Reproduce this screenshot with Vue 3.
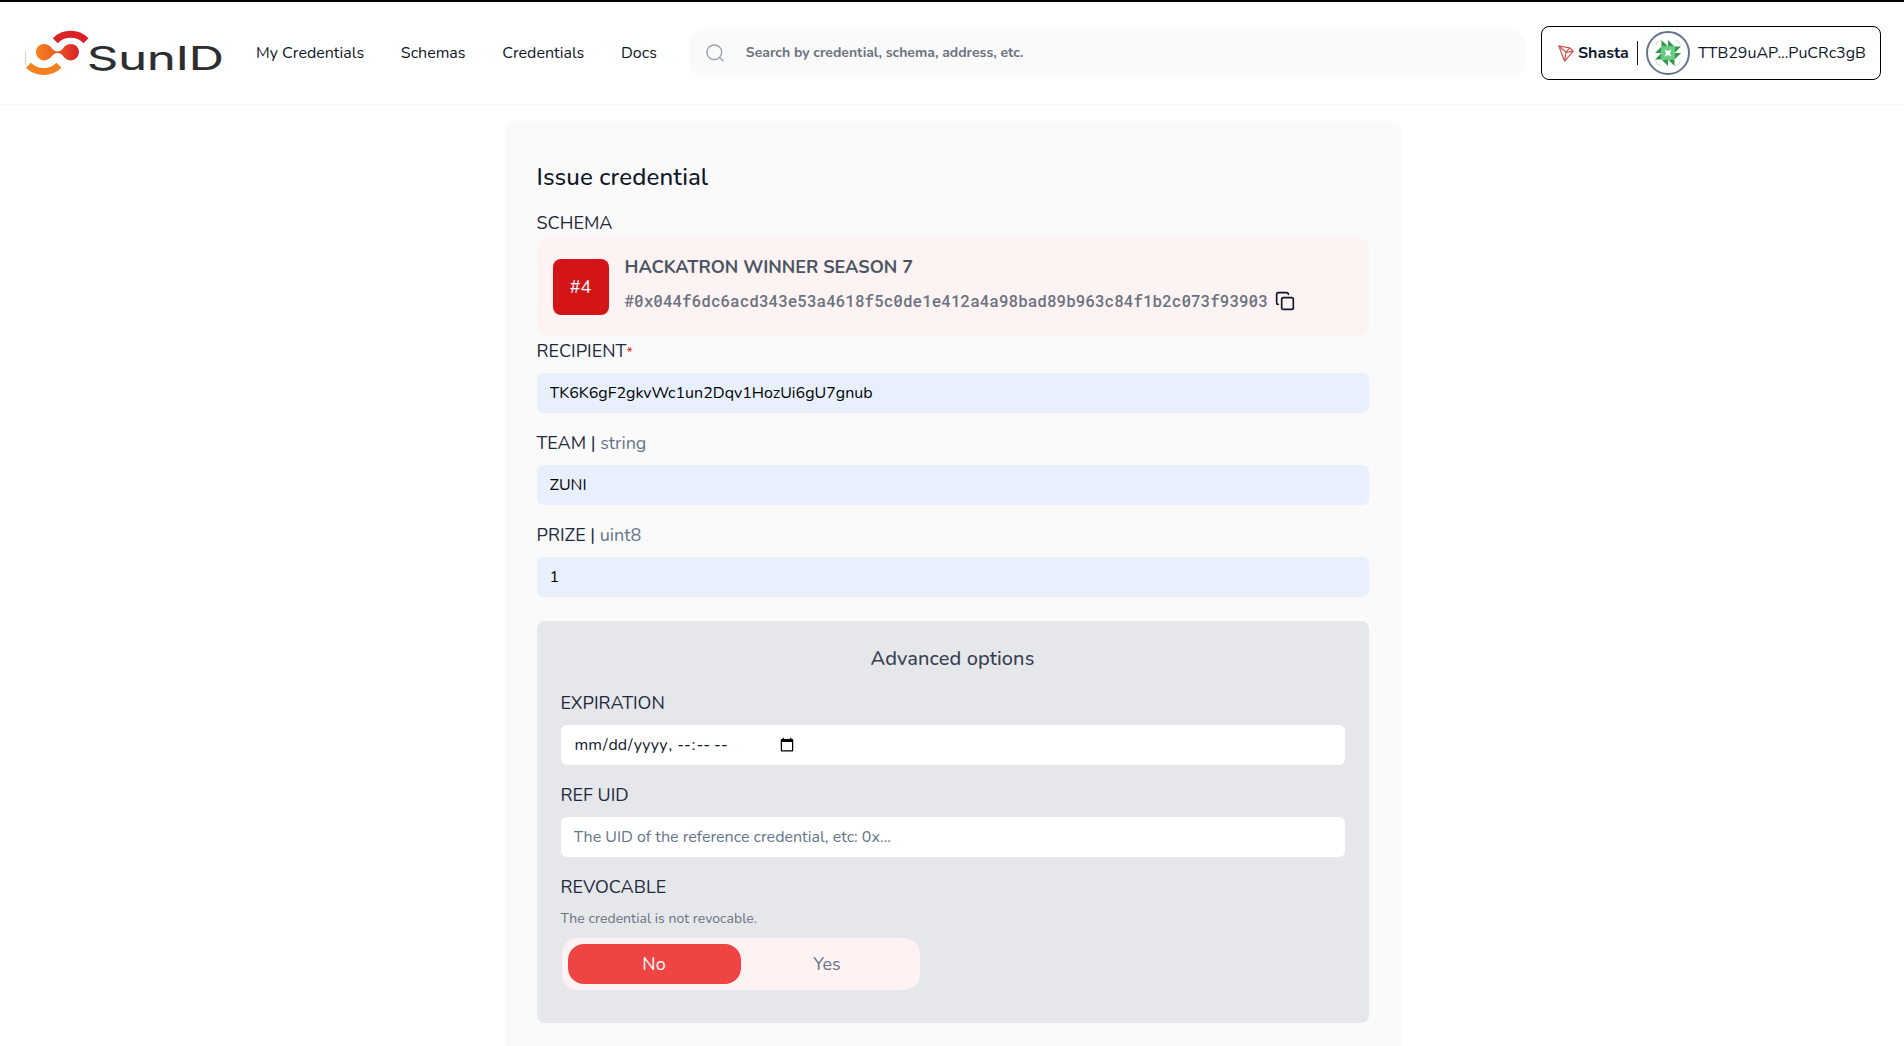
<script setup>
import { ref, computed } from 'vue'

const links = ['My Credentials', 'Schemas', 'Credentials', 'Docs']

const schema = {
  id: 4,
  name: 'HACKATRON WINNER SEASON 7',
  uid: '#0x044f6dc6acd343e53a4618f5c0de1e412a4a98bad89b963c84f1b2c073f93903'
}

const search = ref('')
const recipient = ref('TK6K6gF2gkvWc1un2Dqv1HozUi6gU7gnub')
const fields = ref([
  { name: 'TEAM', type: 'string', value: 'ZUNI' },
  { name: 'PRIZE', type: 'uint8', value: '1' }
])
const expiration = ref('')
const refUid = ref('')
const revocable = ref(false)

const revocableNote = computed(() =>
  revocable.value ? 'The credential is revocable.' : 'The credential is not revocable.'
)
</script>

<template>
  <div class="page">
    <header class="header">
      <svg class="logo" width="200" height="48" viewBox="24 29 200 48">
        <defs>
          <linearGradient id="link" x1="36" x2="79" y1="0" y2="0" gradientUnits="userSpaceOnUse">
            <stop offset="0" stop-color="#f58220" />
            <stop offset="0.5" stop-color="#ea5a22" />
            <stop offset="1" stop-color="#d91f29" />
          </linearGradient>
        </defs>
        <path d="M25.500 51v14" stroke="#c8c8c8" stroke-width="0.800" />
        <path d="M55.300 40.700A21.700 21.700 0 0 1 86 40.700" fill="none" stroke="#da2128" stroke-width="7" />
        <path d="M28.500 65.300A21.700 21.700 0 0 0 59 65.300" fill="none" stroke="#f58020" stroke-width="7" />
        <g fill="url(#link)">
          <circle cx="44.200" cy="52.200" r="8.300" />
          <circle cx="70.700" cy="52.200" r="8.300" />
          <path d="M50 46.500Q54 51.600 57.500 51.600T65 46.500V58Q61 52.900 57.500 52.900T50 58Z" />
        </g>
        <text class="logo__text" x="87" y="70" textLength="137" lengthAdjust="spacingAndGlyphs">SunID</text>
      </svg>

      <nav class="nav">
        <a v-for="link in links" :key="link" class="nav__link">{{ link }}</a>
      </nav>

      <label class="search">
        <svg width="24" height="24" viewBox="0 0 24 24" fill="none" stroke="#9ca3af" stroke-width="1.500">
          <circle cx="10.300" cy="11.300" r="7.400" />
          <path d="M15.900 16.700 19.500 20.300" />
        </svg>
        <input v-model="search" class="search__input" placeholder="Search by credential, schema, address, etc." />
      </label>

      <button class="wallet">
        <svg width="16" height="17" viewBox="0 0 16 17" fill="none" stroke="#d9534f" stroke-width="1.200" stroke-linejoin="round">
          <path d="M.8.8 11.600 2.800 15.300 6.200 6.600 16.200ZM.8.8 8 7.300 6.600 16.200M8 7.300 15.300 6.200M8 7.300 11.600 2.800" />
        </svg>
        <span class="wallet__network">Shasta</span>
        <span class="wallet__divider"></span>
        <span class="wallet__avatar">
          <svg width="26" height="26" viewBox="0 0 26 26">
            <path fill="#66cc7f" d="M6.500 6.500h13v13h-13z" />
            <path fill="#fff" d="M9.500 9.500 13 11 16.500 9.500 15 13 16.500 16.500 13 15 9.500 16.500 11 13Z" />
            <g v-for="turn in [0, 90, 180, 270]" :key="turn" :transform="`rotate(${turn} 13 13)`">
              <path fill="#2f9a4b" d="M6.500 0 13 6.500H6.500ZM13 0 19.500 6.500H13Z" />
              <path fill="none" stroke="#a9e2b7" stroke-width="0.800" d="M.5 5.500A6 6 0 0 1 5.500 .5" />
            </g>
          </svg>
        </span>
        <span>TTB29uAP...PuCRc3gB</span>
      </button>
    </header>

    <main class="card">
      <h1 class="card__title">Issue credential</h1>

      <div class="label">SCHEMA</div>
      <section class="schema">
        <div class="schema__badge">#{{ schema.id }}</div>
        <div class="schema__body">
          <div class="schema__name">{{ schema.name }}</div>
          <div class="schema__uid">
            <span>{{ schema.uid }}</span>
            <svg width="20" height="20" viewBox="0 0 24 24" fill="none" stroke="#0f172a" stroke-width="2" stroke-linecap="round" stroke-linejoin="round">
              <rect x="8" y="8" width="14" height="14" rx="2" />
              <path d="M4 16c-1.100 0-2-.9-2-2V4c0-1.100.9-2 2-2h10c1.100 0 2 .9 2 2" />
            </svg>
          </div>
        </div>
      </section>

      <div class="field">
        <label class="label">RECIPIENT<span class="label__required">*</span></label>
        <input v-model="recipient" class="input input--filled" />
      </div>
      <div v-for="field in fields" :key="field.name" class="field">
        <label class="label">{{ field.name }} | <span class="label__type">{{ field.type }}</span></label>
        <input v-model="field.value" class="input input--filled" />
      </div>

      <section class="advanced">
        <h2 class="advanced__title">Advanced options</h2>
        <div class="field">
          <label class="label">EXPIRATION</label>
          <input v-model="expiration" type="datetime-local" class="input input--date" />
        </div>
        <div class="field">
          <label class="label">REF UID</label>
          <input v-model="refUid" class="input" placeholder="The UID of the reference credential, etc: 0x..." />
        </div>
        <div class="label">REVOCABLE</div>
        <p class="note">{{ revocableNote }}</p>
        <div class="toggle">
          <button :class="['toggle__btn', { 'toggle__btn--on': !revocable }]" @click="revocable = false">No</button>
          <button :class="['toggle__btn', { 'toggle__btn--on': revocable }]" @click="revocable = true">Yes</button>
        </div>
      </section>
    </main>
  </div>
</template>

<style>
body { background: #ffffff; overflow: hidden; }
</style>

<style scoped>
.page {
  box-sizing: border-box;
  height: 1046px;
  overflow: hidden;
  border-top: 2px solid #000000;
  font-family: Nunito, "Open Sans", sans-serif;
  font-size: 16px;
  line-height: 24px;
  color: #0f172a;
}
.page * { box-sizing: border-box; }
button, input { font: inherit; color: inherit; border: none; }

.header {
  display: flex;
  align-items: center;
  height: 103px;
  padding: 0 23px 0 24px;
  border-bottom: 1px solid #f7f7f8;
}
.logo { flex: none; }
.logo__text {
  font-family: Inter, sans-serif;
  font-size: 33px;
  fill: #2b2d2e;
  stroke: #2b2d2e;
  stroke-width: 0.2px;
}

.nav { display: flex; gap: 36.7px; margin-left: 32px; white-space: nowrap; }

.search {
  flex: 1;
  display: flex;
  align-items: center;
  height: 48px;
  margin: 0 16px 0 32px;
  padding: 0 15px;
  border-radius: 16px;
  background: #fafafa;
}
.search__input {
  flex: 1;
  margin-left: 18px;
  padding: 0;
  background: none;
  font-size: 14px;
  font-weight: 700;
}
.search__input::placeholder { color: #6b7280; }

.wallet {
  display: flex;
  align-items: center;
  width: 340px;
  height: 54px;
  padding: 0 0 0 16px;
  border: 1px solid #000000;
  border-radius: 8px;
  background: #ffffff;
}
.wallet__network { width: 51px; margin-left: 4px; font-weight: 700; text-align: left; }
.wallet__divider { width: 1px; height: 24px; margin: 0 8px; background: #0f172a; }
.wallet__avatar {
  display: flex;
  align-items: center;
  justify-content: center;
  width: 44px;
  height: 44px;
  margin-right: 8px;
  border: 2px solid #64748b;
  border-radius: 50%;
}

.card {
  height: 1000px;
  margin: 16px 503.5px 0 504.5px;
  padding: 40px 32px;
  border-radius: 8px;
  background: #fafafa;
}
.card__title {
  margin: 0 0 16px;
  font-size: 24px;
  line-height: 32px;
  font-weight: 500;
  letter-spacing: 0.12px;
}

.label { display: block; font-size: 18px; line-height: 28px; color: #1e293b; }
.label__type { color: #64748b; }
.label__required { font-size: 14px; line-height: 1; color: #dc2626; }

.schema {
  display: flex;
  align-items: center;
  gap: 16px;
  height: 100px;
  padding: 0 16px;
  border-radius: 12px;
  background: #fdf3f3;
}
.schema__badge {
  display: flex;
  align-items: center;
  justify-content: center;
  width: 56px;
  height: 56px;
  border-radius: 8px;
  background: #d31518;
  color: #ffffff;
  font-size: 18px;
}
.schema__body { padding-bottom: 8px; }
.schema__name { font-size: 18px; line-height: 28px; font-weight: 700; color: #4b5563; }
.schema__uid {
  display: flex;
  align-items: center;
  gap: 7px;
  margin-top: 8px;
  font-family: "Roboto Mono", "Liberation Mono", monospace;
  font-weight: 500;
  color: #6b7280;
}

.field { margin-bottom: 16px; }
.input {
  display: block;
  width: 100%;
  height: 40px;
  margin-top: 8px;
  padding: 8px 12px;
  border: 1px solid transparent;
  border-radius: 6px;
  background: #ffffff;
}
.input::placeholder { color: #64748b; }
.input--filled { background: #e8f0fe; color: #000000; }
/* keeps the picker icon next to the date text */
.input--date { padding-right: 546.5px; }

.advanced {
  margin-top: 24px;
  height: 402px;
  padding: 24px;
  border-radius: 8px;
  background: #e5e7eb;
}
.advanced__title {
  margin: 0 0 16px;
  font-size: 20px;
  line-height: 28px;
  font-weight: 500;
  letter-spacing: 0.08px;
  text-align: center;
  color: #374151;
}
.note { margin: 8px 0 9px; font-size: 14px; line-height: 20px; letter-spacing: 0.04px; color: #6b7280; }

.toggle {
  display: flex;
  width: 358px;
  height: 52px;
  margin-left: 1px;
  padding: 6px;
  border-radius: 16px;
  background: #fef2f2;
}
.toggle__btn {
  flex: 1;
  border-radius: 16px;
  background: none;
  font-size: 18px;
  color: #64748b;
}
.toggle__btn--on { background: #ef4444; color: #ffffff; }
</style>
